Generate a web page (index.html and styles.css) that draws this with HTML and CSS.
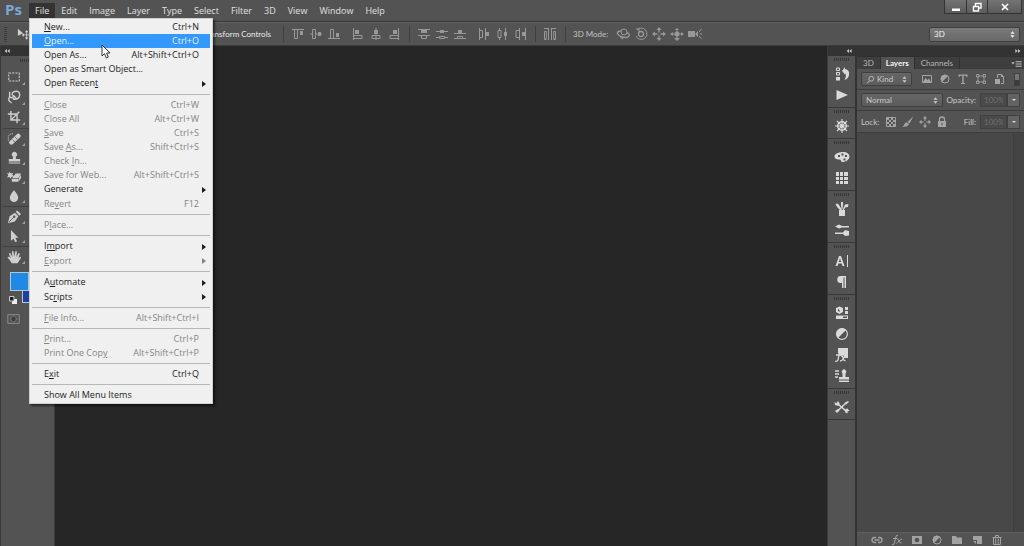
FILE: index.html
```html
<!DOCTYPE html>
<html lang="en">
<head>
<meta charset="utf-8">
<title>Photo editor</title>
<link rel="stylesheet" href="styles.css">
</head>
<body>
<svg class="defs" aria-hidden="true">
  <symbol id="marquee" viewBox="0 0 16 16"><path d="M2 3.500h12v9H2z" fill="none" stroke="currentColor" stroke-width="1.200" stroke-dasharray="2.500 1.300"/></symbol>
  <symbol id="lasso" viewBox="0 0 16 16"><path d="M3 2v6q-2 3 0 5 2 1 2 2M3 8l3 1M6 3q6-3 8 0 1.500 5-2 7-3 1-5 0V6l4 4M6 3v3" fill="none" stroke="currentColor" stroke-width="1.600"/></symbol>
  <symbol id="crop" viewBox="0 0 16 16"><path d="M4.500 1v10.500H15M1 4.500h10.500V15M5 11l9-9" fill="none" stroke="currentColor" stroke-width="1.600"/></symbol>
  <symbol id="heal" viewBox="0 0 16 16"><path d="M5 12L13 4.500" stroke="currentColor" stroke-width="5" stroke-linecap="round"/><path d="M6 8.500l3 3M9 5.500l3 3" stroke="#666"/><path d="M1.500 10V5q1-3 6-3" fill="none" stroke="currentColor" stroke-dasharray="1.500 1"/></symbol>
  <symbol id="stamp" viewBox="0 0 16 16"><path d="M6.500 9L7 6.500a2.900 2.900 0 1 1 3 0L10.500 9H15v3H2V9zM2 13h13v1.300H2z" fill="currentColor"/></symbol>
  <symbol id="eraser" viewBox="0 0 16 16"><path d="M6 9l4-5h6l-3 5zM5.500 10H13v3.500H5.500zM13.500 9.500L16 5v4l-2.500 4zM0 3l2 1 1-2 1.500 2L7 3 6 5.500 8 7 5 8 4 10 3 8 0 8.500 1.500 6z" fill="currentColor"/></symbol>
  <symbol id="drop" viewBox="0 0 16 16"><path d="M8 1.500Q12.800 7 12.800 10a4.800 4.800 0 0 1-9.600 0Q3.200 7 8 1.500z" fill="currentColor"/></symbol>
  <symbol id="pen" viewBox="0 0 16 16"><path d="M1 15l2-8 6-4 4 4-4 6zM10 2l1.500-1.500L16 4.500 14 6.500z" fill="currentColor"/><path d="M2 14l6-6" stroke="#505050"/><circle cx="8.300" cy="7.700" r="1.300" fill="#505050"/></symbol>
  <symbol id="pointer" viewBox="0 0 16 16"><path d="M4.500 1l8.500 9H9.500l2 4-2 1-2-4-3 2.500z" fill="currentColor"/></symbol>
  <symbol id="hand" viewBox="0 0 16 16"><path d="M5.500 15Q4 12 .5 8.500L2.500 7.500l2 2L2 4l1.700-.6L6.300 8 5.500 1.500h1.800L8.300 7.500 9.500 1.500h1.800L10.800 8l2.400-4.500 1.500.6L13 9.500l2.500-2 .5 1.500L12 15z" fill="currentColor"/></symbol>
  <symbol id="mask" viewBox="0 0 16 16"><path d="M1.500 3h13v10h-13z" fill="none" stroke="currentColor"/><circle cx="8" cy="8" r="2.600" fill="#3e3e3e"/><circle cx="8" cy="8" r="3.200" fill="none" stroke="currentColor" stroke-dasharray="1.500 .8"/></symbol>
  <symbol id="move" viewBox="0 0 16 16"><path d="M1 2l6 5-6 3z" fill="currentColor"/><path d="M11 5v8M7 9h8" stroke="currentColor"/><path d="M11 3.500l2 2.500H9zM11 14.500L13 12H9zM5.500 9L8 7v4zM16 9l-2-2v4z" fill="currentColor"/></symbol>

  <symbol id="al-top" viewBox="0 0 14 14"><path d="M1 2.500h12M3.500 3v8.500h3V3" fill="none" stroke="currentColor"/><path d="M9 4h3v4H9z" fill="currentColor"/></symbol>
  <symbol id="al-mid" viewBox="0 0 14 14"><path d="M1 7h2M7 7h6M3.500 2.500h3v9h-3z" fill="none" stroke="currentColor"/><path d="M9 5h3v4H9z" fill="currentColor"/></symbol>
  <symbol id="al-bot" viewBox="0 0 14 14"><path d="M1 11.500h12M3.500 11V2.500h3V11" fill="none" stroke="currentColor"/><path d="M9 6h3v4H9z" fill="currentColor"/></symbol>
  <symbol id="al-left" viewBox="0 0 14 14"><path d="M2.500 1v12M3 8.500h8v3H3" fill="none" stroke="currentColor"/><path d="M4 3h4v4H4z" fill="currentColor"/></symbol>
  <symbol id="al-cen" viewBox="0 0 14 14"><path d="M7 1v12M3 8.500h8v3H3z" fill="none" stroke="currentColor"/><path d="M5 3h4v4H5z" fill="currentColor"/></symbol>
  <symbol id="al-right" viewBox="0 0 14 14"><path d="M11.500 1v12M11 8.500H3v3h8" fill="none" stroke="currentColor"/><path d="M6 3h4v4H6z" fill="currentColor"/></symbol>
  <symbol id="d-top" viewBox="0 0 14 14"><path d="M1 2.500h12M1 8.500h12M4.500 9v2.500h5V9" fill="none" stroke="currentColor"/><path d="M4 3h6v3H4z" fill="currentColor"/></symbol>
  <symbol id="d-mid" viewBox="0 0 14 14"><path d="M1 4.500h12M1 10.500h3M10 10.500h3M4.500 9.500h5v2h-5z" fill="none" stroke="currentColor"/><path d="M5 3h4v3H5z" fill="currentColor"/></symbol>
  <symbol id="d-bot" viewBox="0 0 14 14"><path d="M1 6.500h12M1 11.500h12M4.500 11V9.500h5V11" fill="none" stroke="currentColor"/><path d="M5 3h4v3H5z" fill="currentColor"/></symbol>
  <symbol id="d-left" viewBox="0 0 14 14"><path d="M2.500 1v12M8.500 1v12M3 3.500h2.500v7H3" fill="none" stroke="currentColor"/><path d="M9 5h3v4H9z" fill="currentColor"/></symbol>
  <symbol id="d-cen" viewBox="0 0 14 14"><path d="M4.500 1v2M4.500 11v2M10.500 1v12M3 3.500h3v7H3z" fill="none" stroke="currentColor"/><path d="M9 5h3v4H9z" fill="currentColor"/></symbol>
  <symbol id="d-right" viewBox="0 0 14 14"><path d="M6.500 1v12M12.500 1v12M6 3.500H3v7h3" fill="none" stroke="currentColor"/><path d="M9 5h3v4H9z" fill="currentColor"/></symbol>
  <symbol id="d-auto" viewBox="0 0 14 14"><path d="M1 1.500h5M8 1.500h5M1.500 4.500h1.800v8H1.500zM5.500 2v11M8.500 2v11M10.700 4.500h1.800v8h-1.800z" fill="none" stroke="currentColor"/></symbol>
  <symbol id="m-orbit" viewBox="0 0 14 14"><circle cx="8" cy="5" r="3" fill="none" stroke="currentColor"/><path d="M5 4C1 4 0 7 4 9s8 2 9 0-1-3-2-3M7 12l-3-3" fill="none" stroke="currentColor" stroke-width="1.300"/></symbol>
  <symbol id="m-roll" viewBox="0 0 14 14"><circle cx="7" cy="7" r="2.500" fill="none" stroke="currentColor" stroke-width="1.300"/><path d="M3 3a5.700 5.700 0 1 1-1 6M2 2l3 0v3" fill="none" stroke="currentColor"/></symbol>
  <symbol id="m-pan" viewBox="0 0 14 14"><path d="M7 2v3.500M7 8.500V12M2 7h3.500M8.500 7H12" stroke="currentColor" stroke-width="1.400"/><path d="M7 0l2.500 3h-5zM7 14l2.500-3h-5zM0 7l3-2.500v5zM14 7l-3-2.500v5z" fill="currentColor"/></symbol>
  <symbol id="m-slide" viewBox="0 0 14 14"><circle cx="7" cy="7" r="2.500" fill="currentColor"/><path d="M1 7h12M7 3v9" stroke="currentColor"/><path d="M7 1l2 2H5zM7 14l3-3H4zM0 7l3-2v4zM14 7l-3-2v4z" fill="currentColor"/></symbol>
  <symbol id="m-cam" viewBox="0 0 14 14"><path d="M0 4h7v6H0zM7 7l3-3v6z" fill="currentColor"/><path d="M13.500 2L11 5M11 9l2.500 3M12 7h2" stroke="currentColor"/></symbol>

  <symbol id="history" viewBox="0 0 16 16"><path d="M2.500 2h3v2.500h-3zM2.500 6.500h3V9h-3z" fill="none" stroke="currentColor"/><path d="M2 11h4v3.500H2zM8 5l3-4v2q5 1 4 6-.6 4-4.500 5Q13 9.500 11 7v1.500z" fill="currentColor"/></symbol>
  <symbol id="play" viewBox="0 0 16 16"><path d="M2.500 3L14 8 2.500 13z" fill="currentColor"/></symbol>
  <symbol id="wheel" viewBox="0 0 16 16"><circle cx="8" cy="8" r="4.300" fill="none" stroke="currentColor" stroke-width="1.400"/><path d="M8 1v14M1 8h14M3 3l10 10M13 3L3 13" stroke="currentColor" stroke-width="1.100"/><circle cx="8" cy="8" r="1.600" fill="currentColor"/></symbol>
  <symbol id="palette" viewBox="0 0 16 16"><path fill-rule="evenodd" d="M8 3c4-.6 7.500 1.500 7.500 4.500S12 13 8.500 13c-2 0-1-2.500-3-2.500S.5 10 .5 7.500 4 3.500 8 3zM4 6v2h2V6zM7.500 4.500v2h2v-2zM11 6v2h2V6zM9.500 9.500v2h2v-2z" fill="currentColor"/></symbol>
  <symbol id="grid" viewBox="0 0 16 16"><path d="M2 2h12v12H2z" fill="currentColor"/><path d="M5.500 2v12M9.500 2v12M2 6.500h12M2 10.500h12" stroke="#4d4d4d"/></symbol>
  <symbol id="brushes" viewBox="0 0 16 16"><path d="M5 9h6v6H5zM1.500 3l2-.5L5 4l3 5H6L3 6zM7 1h2v3L8.500 8h-1L7 4zM11 3.500L14.500 3 14 6l-3 .5L10 9H8.500z" fill="currentColor"/></symbol>
  <symbol id="presets" viewBox="0 0 16 16"><path d="M1 4.500l4-2L8 4h7v1.500H8L5 6.500zM1 10.500h8l2-2.500 4 1v4.500l-4 .5-2-2H1z" fill="currentColor"/></symbol>
  <symbol id="char" viewBox="0 0 16 16"><path fill-rule="evenodd" d="M5 3h2l3.500 10h-2L7.700 10.500H4.300L3.500 13h-2zM6 5.500L4.800 9h2.400z" fill="currentColor"/><path d="M13.500 2v12" stroke="currentColor"/></symbol>
  <symbol id="para" viewBox="0 0 16 16"><path d="M7 2h5v12h-1.500V3.500H9.500V14H8V9H6.500a3.500 3.500 0 0 1 .5-7z" fill="currentColor"/></symbol>
  <symbol id="props" viewBox="0 0 16 16"><path fill-rule="evenodd" d="M5.500 1.500L9 3v4L5.500 9 2 7V3zM4 4v2l1.500 1V5zM11 2h3v3h-3zM11 6h3v3h-3zM2 10.500h12V14H2zM9 11.500v1.500h4v-1.500z" fill="currentColor"/></symbol>
  <symbol id="adjust" viewBox="0 0 16 16"><circle cx="8" cy="8" r="5.400" fill="none" stroke="currentColor" stroke-width="1.200"/><path d="M12 4A5.600 5.600 0 0 0 4 12z" fill="currentColor"/></symbol>
  <symbol id="styles" viewBox="0 0 16 16"><path d="M4 1h10v10h-3L9 8 8 10 4 6z" fill="currentColor"/><path d="M8 5Q5.500 3.500 5 8l-1 5q-1 2-3 1M2 8h5M7 9q1.500-1 2 2t2.500 2.500M12 9q-2 1-3 3t-3 2" fill="none" stroke="currentColor" stroke-width="1.300"/></symbol>
  <symbol id="clone" viewBox="0 0 16 16"><path d="M1 3h4M1 6h4M1 9h3" stroke="currentColor" stroke-width="1.300"/><path d="M8.500 9V5.500a2.300 2.300 0 1 1 3 0V9H15v2.500H5V9zM5 12.500h10V14H5z" fill="currentColor"/></symbol>
  <symbol id="tools" viewBox="0 0 16 16"><path d="M4 5l8 7M13 3L3.500 12" stroke="currentColor" stroke-width="1.600"/><path d="M.5 3l2 1.200L4 2l1.700 2.500L4.500 7 1 6zM11.500 10l2-.5 2 2.500-2 .2.200 2-2.700-.7zM1 12l3-2 1.500 1.500L3 14zM11 4l3-2 1 1-3 2.500z" fill="currentColor"/></symbol>

  <symbol id="search" viewBox="0 0 12 12"><circle cx="7" cy="5" r="3.200" fill="none" stroke="currentColor"/><path d="M5 7.500L1.500 11" stroke="currentColor" stroke-width="1.300"/></symbol>
  <symbol id="image" viewBox="0 0 12 12"><path d="M1.500 2.500h9v7h-9z" fill="none" stroke="currentColor"/><path d="M2 9l2.500-4 2 2L8 5.500 10 9z" fill="currentColor"/></symbol>
  <symbol id="type" viewBox="0 0 12 12"><path d="M1.500 1.500h9V4h-1l-.5-1.200H6.700V10H8v1H4v-1h1.300V2.800H3L2.500 4h-1z" fill="currentColor"/></symbol>
  <symbol id="shape" viewBox="0 0 12 12"><path d="M3 3h6v6H3zM1.500 1.500H4V4H1.500zM8 1.500h2.500V4H8zM1.500 8H4v2.500H1.500zM8 8h2.500v2.500H8z" fill="none" stroke="currentColor" stroke-width=".8"/></symbol>
  <symbol id="smart" viewBox="0 0 12 12"><path d="M4.500 5V1.500h4l2 2v7H8" fill="none" stroke="currentColor"/><path d="M2 6h5v5H2zM8 1l3 3H8z" fill="currentColor"/></symbol>
  <symbol id="half" viewBox="0 0 12 12"><circle cx="6" cy="6" r="4" fill="none" stroke="currentColor"/><path d="M9 3A4.200 4.200 0 0 0 3 9z" fill="currentColor"/></symbol>
  <symbol id="checker" viewBox="0 0 12 12"><path d="M1.500 1.500h9v9h-9z" fill="none" stroke="currentColor"/><path d="M2 2h2v2H2zM6 2h2v2H6zM4 4h2v2H4zM8 4h2v2H8zM2 6h2v2H2zM6 6h2v2H6zM4 8h2v2H4zM8 8h2v2H8z" fill="currentColor"/></symbol>
  <symbol id="brush" viewBox="0 0 12 12"><path d="M11.500 0L7.500 7.500 5.500 6zM5 6.500L7 8Q6 11 0 11q2-1 2.500-3T5 6.500z" fill="currentColor"/></symbol>
  <symbol id="lock" viewBox="0 0 12 12"><path d="M3.500 5.500V3.500a2.500 2.500 0 0 1 5 0v2" fill="none" stroke="currentColor" stroke-width="1.300"/><path fill-rule="evenodd" d="M2 5h8v6H2zM5.500 7v2h1V7z" fill="currentColor"/></symbol>
  <symbol id="link" viewBox="0 0 12 12"><path d="M5 3.500H3.500a2.500 2.500 0 0 0 0 5H5M7 3.500h1.500a2.500 2.500 0 0 1 0 5H7M3.500 6h5" fill="none" stroke="currentColor" stroke-width="1.300"/></symbol>
  <symbol id="fx" viewBox="0 0 12 12"><path d="M7 1.500Q5 .5 4.500 4L3.500 9q-.5 2-2.500 1.500M2 4.500h4M6 5q1-.5 2 2t2.500 2M11 5q-1.500 0-3 2T5.500 9.500" fill="none" stroke="currentColor"/></symbol>
  <symbol id="addmask" viewBox="0 0 12 12"><path fill-rule="evenodd" d="M1 2h10v8H1zM6 3.700a2.300 2.300 0 1 0 .01 0z" fill="currentColor"/></symbol>
  <symbol id="folder" viewBox="0 0 12 12"><path d="M1 2h4l1 1.500h5V10H1z" fill="currentColor"/></symbol>
  <symbol id="new" viewBox="0 0 12 12"><path d="M2 2h9v8H6V6H2z" fill="currentColor"/><path d="M2 7l3 3V7z" fill="currentColor"/></symbol>
  <symbol id="trash" viewBox="0 0 12 12"><path d="M1.500 3.500h9M4.500 3V1.500h3V3M2.500 4v6.500h7V4M4.700 4.500V10M7.300 4.500V10" fill="none" stroke="currentColor"/></symbol>
  <symbol id="updown" viewBox="0 0 6 8"><path d="M3 0l2.500 3h-5zM3 8L.5 5h5z" fill="currentColor"/></symbol>
  <symbol id="left2" viewBox="0 0 8 6"><path d="M4 0v6L.5 3zM8 0v6L4.500 3z" fill="currentColor"/></symbol>
  <symbol id="right2" viewBox="0 0 8 6"><path d="M4 0v6l3.500-3zM0 0v6l3.500-3z" fill="currentColor"/></symbol>
</svg>

<header class="menubar">
  <span class="logo">Ps</span>
  <nav class="menus">
    <div class="menu-root">
      <button class="menu-title open" aria-expanded="true">File</button>
      <div class="menu" role="menu">
        <button class="item"><span><u>N</u>ew...</span><span>Ctrl+N</span></button>
        <button class="item active"><span><u>O</u>pen...</span><span>Ctrl+O</span></button>
        <button class="item"><span>Open As...</span><span>Alt+Shift+Ctrl+O</span></button>
        <button class="item"><span>Open as Smart Object...</span></button>
        <button class="item sub"><span>Open Recen<u>t</u></span></button>
        <hr>
        <button class="item" disabled><span><u>C</u>lose</span><span>Ctrl+W</span></button>
        <button class="item" disabled><span>Close All</span><span>Alt+Ctrl+W</span></button>
        <button class="item" disabled><span><u>S</u>ave</span><span>Ctrl+S</span></button>
        <button class="item" disabled><span>Save <u>A</u>s...</span><span>Shift+Ctrl+S</span></button>
        <button class="item" disabled><span>Check <u>I</u>n...</span></button>
        <button class="item" disabled><span>Save for Web...</span><span>Alt+Shift+Ctrl+S</span></button>
        <button class="item sub"><span>Generate</span></button>
        <button class="item" disabled><span>Re<u>v</u>ert</span><span>F12</span></button>
        <hr>
        <button class="item" disabled><span>P<u>l</u>ace...</span></button>
        <hr>
        <button class="item sub"><span>I<u>m</u>port</span></button>
        <button class="item sub" disabled><span><u>E</u>xport</span></button>
        <hr>
        <button class="item sub"><span>A<u>u</u>tomate</span></button>
        <button class="item"><span>Sc<u>r</u>ipts</span><i class="arrow"></i></button>
        <hr>
        <button class="item" disabled><span><u>F</u>ile Info...</span><span>Alt+Shift+Ctrl+I</span></button>
        <hr>
        <button class="item" disabled><span><u>P</u>rint...</span><span>Ctrl+P</span></button>
        <button class="item" disabled><span>Print One Cop<u>y</u></span><span>Alt+Shift+Ctrl+P</span></button>
        <hr>
        <button class="item"><span>E<u>x</u>it</span><span>Ctrl+Q</span></button>
        <hr>
        <button class="item"><span>Show All Menu Items</span></button>
        <svg class="cursor" viewBox="0 0 10 15"><path d="M1 1v11l2.500-2.300L5.300 14l2-.9L5.600 9H9z" fill="#fff" stroke="#222" stroke-width=".9"/></svg>
      </div>
    </div>
    <button class="menu-title">Edit</button>
    <button class="menu-title">Image</button>
    <button class="menu-title">Layer</button>
    <button class="menu-title">Type</button>
    <button class="menu-title">Select</button>
    <button class="menu-title">Filter</button>
    <button class="menu-title">3D</button>
    <button class="menu-title">View</button>
    <button class="menu-title">Window</button>
    <button class="menu-title">Help</button>
  </nav>
  <div class="window-buttons">
    <button aria-label="Minimize"><svg viewBox="0 0 10 10"><path d="M1 6.500h8v2.500H1z" fill="#fff"/></svg></button>
    <button aria-label="Restore"><svg viewBox="0 0 10 10"><path d="M3.500 4V1.500h5.500v4.500H7M1.500 4.500h5V9h-5z" fill="none" stroke="#fff" stroke-width="1.400"/></svg></button>
    <button class="close" aria-label="Close"><svg viewBox="0 0 10 10"><path d="M2 2l6 6M8 2L2 8" stroke="#fff" stroke-width="1.700"/></svg></button>
  </div>
</header>

<section class="options">
  <div class="tool-options">
    <span class="vgrip"></span>
    <svg class="i14 bright"><use href="#move"/></svg>
    <span class="transform">Transform Controls</span>
  </div>
  <div class="group">
    <div class="set"><svg class="i14"><use href="#al-top"/></svg><svg class="i14"><use href="#al-mid"/></svg><svg class="i14"><use href="#al-bot"/></svg></div>
    <div class="set"><svg class="i14"><use href="#al-left"/></svg><svg class="i14"><use href="#al-cen"/></svg><svg class="i14"><use href="#al-right"/></svg></div>
  </div>
  <div class="group">
    <div class="set"><svg class="i14"><use href="#d-top"/></svg><svg class="i14"><use href="#d-mid"/></svg><svg class="i14"><use href="#d-bot"/></svg></div>
    <div class="set"><svg class="i14"><use href="#d-left"/></svg><svg class="i14"><use href="#d-cen"/></svg><svg class="i14"><use href="#d-right"/></svg></div>
  </div>
  <div class="group"><svg class="i14"><use href="#d-auto"/></svg></div>
  <div class="group modes"><span class="mode-label">3D Mode:</span>
    <div class="set"><svg class="i14"><use href="#m-orbit"/></svg><svg class="i14"><use href="#m-roll"/></svg><svg class="i14"><use href="#m-pan"/></svg><svg class="i14"><use href="#m-slide"/></svg><svg class="i14"><use href="#m-cam"/></svg></div>
  </div>
  <div class="select workspace"><select aria-label="Workspace"><option>3D</option></select><svg><use href="#updown"/></svg></div>
</section>

<main class="work">
  <aside class="toolbar">
    <div class="strip"><svg><use href="#left2"/></svg></div>
    <div class="toolgrip"><span class="hgrip"></span></div>
    <div class="tools">
      <button aria-label="Marquee"><svg><use href="#marquee"/></svg></button>
      <button aria-label="Lasso"><svg><use href="#lasso"/></svg></button>
      <button aria-label="Crop"><svg><use href="#crop"/></svg></button>
    </div>
    <div class="tools">
      <button aria-label="Healing brush"><svg><use href="#heal"/></svg></button>
      <button aria-label="Clone stamp"><svg><use href="#stamp"/></svg></button>
      <button aria-label="Eraser"><svg><use href="#eraser"/></svg></button>
      <button aria-label="Blur"><svg><use href="#drop"/></svg></button>
    </div>
    <div class="tools">
      <button aria-label="Pen"><svg><use href="#pen"/></svg></button>
      <button aria-label="Path selection"><svg><use href="#pointer"/></svg></button>
    </div>
    <div class="tools last">
      <button aria-label="Hand"><svg><use href="#hand"/></svg></button>
    </div>
    <div class="swatches">
      <button class="back" aria-label="Background colour"></button>
      <button class="fore" aria-label="Foreground colour"></button>
      <svg class="reset" viewBox="0 0 8 8"><path d="M3 3h5v5H3z" fill="#eee"/><path d="M.5.500h4.500v4.500H.5z" fill="#222" stroke="#ccc"/></svg>
    </div>
    <button class="quickmask" aria-label="Quick mask"><svg><use href="#mask"/></svg></button>
  </aside>
  <div class="canvas"></div>
  <aside class="dock">
    <div class="strip"><svg><use href="#left2"/></svg></div>
    <div class="dgroup"><span class="hgrip"></span><button aria-label="History"><svg><use href="#history"/></svg></button><button aria-label="Actions"><svg><use href="#play"/></svg></button></div>
    <div class="dgroup"><span class="hgrip"></span><button aria-label="Navigator"><svg><use href="#wheel"/></svg></button></div>
    <div class="dgroup"><span class="hgrip"></span><button aria-label="Color"><svg><use href="#palette"/></svg></button><button aria-label="Swatches"><svg><use href="#grid"/></svg></button></div>
    <div class="dgroup"><span class="hgrip"></span><button aria-label="Brush"><svg><use href="#brushes"/></svg></button><button aria-label="Brush presets"><svg><use href="#presets"/></svg></button></div>
    <div class="dgroup"><span class="hgrip"></span><button aria-label="Character"><svg><use href="#char"/></svg></button><button aria-label="Paragraph"><svg><use href="#para"/></svg></button></div>
    <div class="dgroup"><span class="hgrip"></span><button aria-label="Properties"><svg><use href="#props"/></svg></button><button aria-label="Adjustments"><svg><use href="#adjust"/></svg></button><button aria-label="Styles"><svg><use href="#styles"/></svg></button><button aria-label="Clone source"><svg><use href="#clone"/></svg></button></div>
    <div class="dgroup"><span class="hgrip"></span><button aria-label="Tool presets"><svg><use href="#tools"/></svg></button></div>
  </aside>
  <aside class="panel">
    <div class="strip right"><svg><use href="#right2"/></svg></div>
    <div class="tabs">
      <button>3D</button><button class="on">Layers</button><button>Channels</button>
      <svg class="flyout" viewBox="0 0 12 8"><path d="M0 2.500h4L2 5zM5 1h7v1H5zM5 3h7v1H5zM5 5h7v1H5zM5 7h7v1H5z" fill="#bbb"/></svg>
    </div>
    <div class="row filter">
      <div class="select kind"><svg class="i12"><use href="#search"/></svg><select aria-label="Filter kind"><option>Kind</option></select><svg><use href="#updown"/></svg></div>
      <div class="icons wide"><svg class="i12"><use href="#image"/></svg><svg class="i12"><use href="#half"/></svg><svg class="i12"><use href="#type"/></svg><svg class="i12"><use href="#shape"/></svg><svg class="i12"><use href="#smart"/></svg></div>
      <span class="switch"></span>
    </div>
    <div class="row">
      <div class="select blend"><select aria-label="Blend mode"><option>Normal</option></select><svg><use href="#updown"/></svg></div>
      <label class="num">Opacity:<input type="text" value="100%" disabled></label><button class="drop" aria-label="Opacity slider"></button>
    </div>
    <div class="row locks">
      <span class="lock-label">Lock:</span>
      <div class="icons"><svg class="i12"><use href="#checker"/></svg><svg class="i12"><use href="#brush"/></svg><svg class="i12"><use href="#m-pan"/></svg><svg class="i12"><use href="#lock"/></svg></div>
      <label class="num">Fill:<input type="text" value="100%" disabled></label><button class="drop" aria-label="Fill slider"></button>
    </div>
    <div class="layers"><div class="track"></div></div>
    <div class="actions"><svg class="i12"><use href="#link"/></svg><svg class="i12"><use href="#fx"/></svg><svg class="i12"><use href="#addmask"/></svg><svg class="i12"><use href="#half"/></svg><svg class="i12"><use href="#folder"/></svg><svg class="i12"><use href="#new"/></svg><svg class="i12"><use href="#trash"/></svg></div>
  </aside>
</main>
</body>
</html>
```
FILE: styles.css
```css
* { box-sizing: border-box; }
body {
  margin: 0;
  height: 100vh;
  display: flex;
  flex-direction: column;
  overflow: hidden;
  background: #535353;
  color: #d6d6d6;
  font: 8px/12px Lato, "Open Sans", sans-serif;
}
button, select, input { font: inherit; color: inherit; }
button { padding: 0; border: 0; background: none; }
svg { display: block; flex: none; }
.defs { position: absolute; width: 0; height: 0; }
.i14 { width: 14px; height: 14px; color: #989898; }
.i12 { width: 12px; height: 12px; }
.bright { color: #d0d0d0; }

.menubar {
  display: flex;
  height: 22px;
  border-bottom: 1px solid #383838;
}
.logo {
  width: 29px;
  padding-left: 5px;
  color: #7ba7d9;
  font: bold 15px/19px "Open Sans", sans-serif;
}
.menus { display: flex; align-items: flex-start; padding-top: 3px; }
.menu-root { position: relative; }
.menu-title {
  height: 15px;
  padding: 0 6px;
  color: #e0e0e0;
  font: 9px/15px "Open Sans", sans-serif;
}
.menu-title.open { background: #333; }
.menu {
  position: absolute;
  z-index: 5;
  top: 15px;
  left: 0;
  width: 184px;
  padding: 1px 2px;
  background: #f0f0f0;
  border: 1px solid #d0d0d0;
  box-shadow: 2px 2px 2px rgba(0, 0, 0, .5);
  font: 9px/14px "Open Sans", sans-serif;
}
.item {
  position: relative;
  display: flex;
  justify-content: space-between;
  width: 100%;
  height: 14px;
  padding: 0 11px 0 12px;
  color: #1c1c1c;
}
.item u { text-underline-offset: 1px; }
.item:disabled { color: #858585; }
.item.active { background: #3399ff; color: #e4f1ff; }
.item.sub { height: 15px; }
.item.sub:disabled { height: 14px; }
.item.sub::after, .arrow {
  content: "";
  align-self: center;
  margin-right: -7px;
  border: 3px solid transparent;
  border-left: 4px solid currentColor;
  border-right: 0;
}
.menu hr {
  margin: 3px 0;
  border: 0;
  border-top: 1px solid #b8b8b8;
}
.cursor { position: absolute; left: 71px; top: 25px; width: 10px; height: 15px; }
.window-buttons {
  display: flex;
  height: 14px;
  margin-left: auto;
  margin-right: 2px;
  border: 1px solid #333;
  border-top: 0;
}
.window-buttons button {
  display: grid;
  place-items: center;
  width: 21px;
  background: linear-gradient(#747474, #5b5b5b);
}
.window-buttons button + button { border-left: 1px solid #333; }
.window-buttons .close { width: 34px; }
.window-buttons svg { width: 10px; height: 10px; }

.options {
  display: flex;
  align-items: center;
  height: 24px;
  border-top: 1px solid #626262;
  border-bottom: 1px solid #3c3c3c;
}
.tool-options {
  display: flex;
  align-items: center;
  width: 283px;
  padding: 0 12px 0 4px;
}
.vgrip {
  width: 3px;
  height: 15px;
  margin-right: 10px;
  background: repeating-linear-gradient(#3c3c3c 0 1px, transparent 1px 2px);
}
.transform { margin-left: auto; color: #ececec; }
.group {
  display: flex;
  align-items: center;
  gap: 10px;
  height: 16px;
  padding: 0 8px 0 7px;
  border-left: 1px solid #404040;
}
.set { display: flex; gap: 4px; }
.mode-label { width: 33px; white-space: nowrap; color: #c0c0c0; }
.select {
  display: flex;
  align-items: center;
  height: 14px;
  padding: 0 4px;
  background: linear-gradient(#666, #5c5c5c);
  border: 1px solid #3f3f3f;
  border-radius: 2px;
}
.select select {
  flex: 1;
  min-width: 0;
  padding: 0;
  border: 0;
  background: none;
  appearance: none;
}
.select > svg:last-child { width: 5px; height: 7px; }
.workspace { width: 91px; height: 15px; margin: 0 4px 0 auto; background: linear-gradient(#7a7a7a, #686868); color: #f2f2f2; }

.work {
  flex: 1;
  min-height: 0;
  display: grid;
  grid-template-columns: 55px 1fr 30px 167px;
}
.canvas { background: #262626; }
.strip {
  display: flex;
  align-items: center;
  height: 10px;
  padding: 0 3px;
  background: #333;
  color: #c8c8c8;
}
.strip svg { width: 6px; height: 4px; }
.strip.right { justify-content: flex-end; }
.hgrip {
  display: block;
  width: 15px;
  height: 3px;
  background: repeating-linear-gradient(90deg, #363636 0 1px, transparent 1px 2px);
}
.toolbar { border-left: 1px solid #3a3a3a; border-right: 1px solid #3a3a3a; }
.toolgrip { display: flex; justify-content: center; height: 11px; padding-top: 3px; }
.tools {
  display: flex;
  flex-direction: column;
  margin: 0 2px;
  padding-bottom: 1px;
  border-bottom: 1px solid #3f3f3f;
}
.tools button {
  position: relative;
  width: 22px;
  height: 20px;
  padding: 3px 4px;
  color: #cfcfcf;
}
.tools svg { width: 14px; height: 14px; }
.tools button::after {
  content: "";
  position: absolute;
  right: 0;
  bottom: 2px;
  border-left: 3px solid transparent;
  border-bottom: 3px solid #a0a0a0;
}
.tools + .tools button { height: 19px; }
.tools.last { border: 0; }
.swatches { position: relative; height: 36px; }
.swatches button { position: absolute; width: 19px; height: 19px; border: 1px solid #b8c4d0; }
.fore { left: 9px; top: 5px; background: #1e8ae6; }
.back { left: 21px; top: 17px; background: #1c3fa0; }
.reset { position: absolute; left: 8px; top: 29px; width: 8px; height: 8px; }
.quickmask { display: block; margin: 9px 0 0 5px; color: #929292; }
.quickmask svg { width: 15px; height: 14px; }

.dock {
  border-left: 1px solid #393939;
  border-right: 2px solid #333;
}
.dock .strip { justify-content: flex-end; }
.dgroup {
  display: flex;
  flex-direction: column;
  align-items: center;
  padding: 2px 0;
  border-bottom: 1px solid #383838;
}
.dgroup .hgrip { margin-bottom: 2px; }
.dgroup button { display: grid; place-items: center; height: 21px; color: #dadada; }
.dgroup svg { width: 16px; height: 16px; }

.panel { display: flex; flex-direction: column; min-width: 0; }
.tabs {
  display: flex;
  height: 13px;
  background: #3e3e3e;
  border-top: 1px solid #303030;
}
.tabs button { padding: 0 6px; color: #b8b8b8; border-right: 1px solid #303030; }
.tabs .on { background: #535353; color: #f4f4f4; font-weight: bold; padding: 0 5px; }
.flyout { width: 11px; height: 7px; margin: 3px 2px 0 auto; }
.row {
  display: flex;
  align-items: center;
  height: 21px;
  padding: 0 4px;
  border-bottom: 1px solid #3d3d3d;
  color: #cacaca;
}
.locks { height: 22px; }
.lock-label { width: 20px; }
.kind { width: 51px; gap: 2px; }
.kind .i12 { width: 9px; height: 9px; }
.blend { width: 82px; }
.icons { display: flex; gap: 5px; margin-left: 4px; color: #a4a4a4; }
.icons.wide { gap: 6px; margin-left: 9px; }
.switch { width: 6px; height: 13px; margin-left: auto; background: linear-gradient(#757575 50%, #3c3c3c 50%); border: 1px solid #404040; }
.num { display: flex; align-items: center; gap: 4px; margin-left: auto; }
.num input {
  width: 27px;
  height: 14px;
  padding: 0 3px;
  background: #4a4a4a;
  border: 1px solid #404040;
  color: #707070;
}
.drop { display: grid; place-items: center; width: 13px; height: 14px; background: #636363; border: 1px solid #404040; }
.drop::after { content: ""; border: 2px solid transparent; border-top-color: #ddd; border-bottom: 0; }
.layers { flex: 1; display: flex; justify-content: flex-end; background: #484848; }
.track { width: 11px; background: #444; border-left: 1px solid #3e3e3e; }
.actions {
  display: flex;
  align-items: center;
  gap: 8px;
  height: 14px;
  padding-left: 14px;
  border-top: 1px solid #606060;
  color: #a2a2a2;
}
```
